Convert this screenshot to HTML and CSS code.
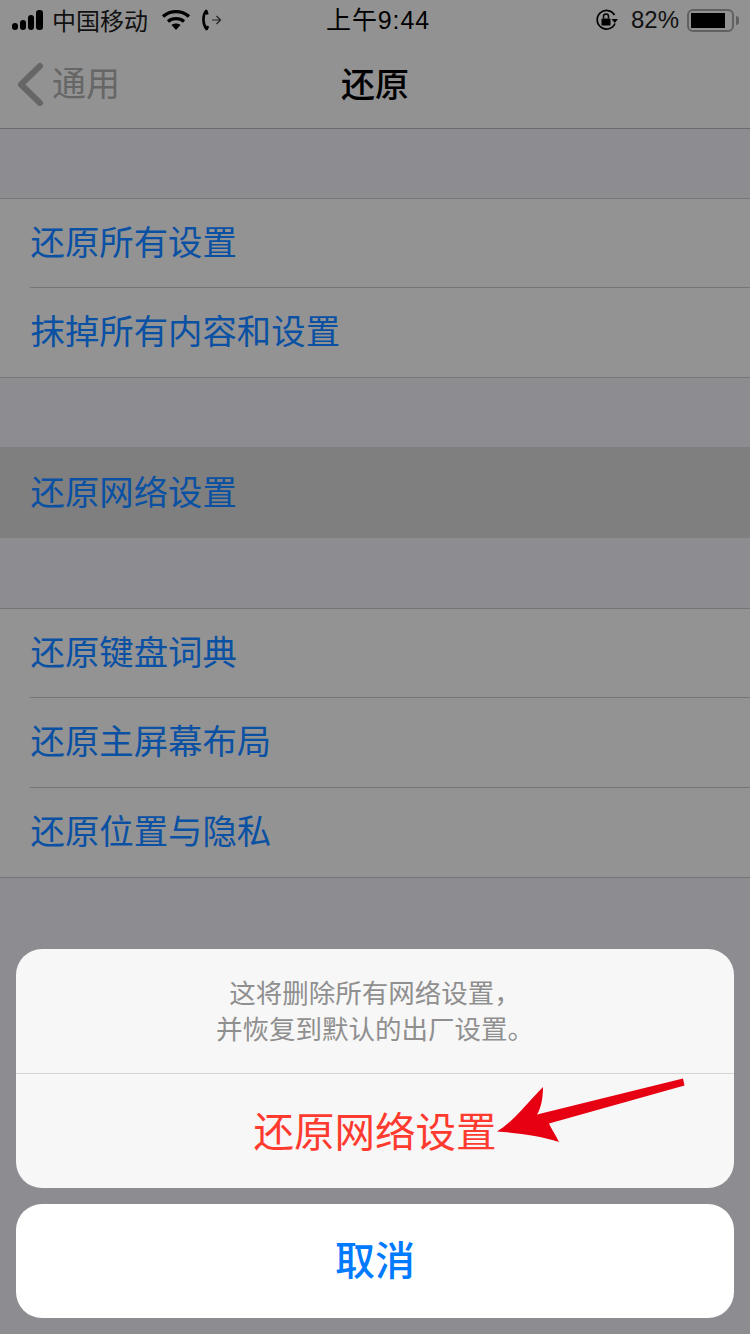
FILE: index.html
```html
<!DOCTYPE html>
<html lang="zh-CN">
<head>
<meta charset="utf-8">
<title>还原</title>
<link rel="stylesheet" href="styles.css">
</head>
<body>
<div class="screen">
  <header class="topbar">
    <div class="status">
      <div class="status-left">
        <svg class="signal" width="36" height="20" viewBox="0 0 36 20"><rect x="0" y="13" width="6" height="7" rx="3"/><rect x="8" y="10" width="6" height="10" rx="3"/><rect x="16" y="5" width="6" height="15" rx="3"/><rect x="24" y="0" width="7" height="20" rx="3"/></svg>
        <span class="carrier">中国移动</span>
        <svg class="wifi" width="30" height="22" viewBox="0 0 30 22" fill="none" stroke="#000" stroke-width="3.4"><path d="M2 7.500C9.500 1 20.500 1 28 7.500"/><path d="M7 12.500C11.500 8.700 18.500 8.700 23 12.500"/><path d="M15 21l-4.500-5c2.500-2 6.500-2 9 0z" fill="#000" stroke="none"/></svg>
        <svg class="phone" width="22" height="24" viewBox="0 0 22 24" fill="none"><path d="M6 3C2.500 7 2.500 16 6.500 21" stroke="#000" stroke-width="2.600" stroke-linecap="round"/><path d="M6 2.500l1.500 4M6.500 21.500l1.500-3.500" stroke="#000" stroke-width="2.600"/><path d="M12 12h8.500M16.500 8l4 4-4 4" stroke="#222" stroke-width="1.200"/></svg>
      </div>
      <span class="clock">上午9:44</span>
      <div class="status-right">
        <svg class="lock" width="24" height="24" viewBox="0 0 24 24" fill="none"><path d="M20 15.500A9.300 9.300 0 1 1 19.500 7" stroke="#000" stroke-width="1.700"/><path d="M16.500 11h6.500l-3.200 4z" fill="#000"/><rect x="6.500" y="10.500" width="9" height="7" rx="1" fill="#000"/><path d="M8.500 10.500V8.500a2.500 2.500 0 0 1 5 0v2" stroke="#000" stroke-width="1.500"/></svg>
        <span class="percent">82%</span>
        <div class="battery"><div class="battery-fill"></div></div>
        <div class="battery-cap"></div>
      </div>
    </div>
    <nav class="nav">
      <div class="back">
        <svg width="28" height="44" viewBox="0 0 28 44" fill="none"><path d="M24 4L5 22.500 24 41" stroke="#666" stroke-width="6" stroke-linecap="round" stroke-linejoin="round"/></svg>
        <span class="back-label">通用</span>
      </div>
      <h1 class="title">还原</h1>
    </nav>
  </header>

  <section class="group">
    <div class="row row-sep">还原所有设置</div>
    <div class="row">抹掉所有内容和设置</div>
  </section>

  <section class="group group-pressed">
    <div class="row row-pressed">还原网络设置</div>
  </section>

  <section class="group">
    <div class="row row-sep">还原键盘词典</div>
    <div class="row row-sep">还原主屏幕布局</div>
    <div class="row">还原位置与隐私</div>
  </section>

  <div class="sheet">
    <div class="card">
      <p class="message">这将删除所有网络设置，<br>并恢复到默认的出厂设置。</p>
      <div class="destructive">还原网络设置</div>
    </div>
    <div class="cancel">取消</div>
  </div>

  <svg class="arrow" width="190" height="70" viewBox="0 0 190 70"><path d="M186 0.500L187.500 7.500 52 45.500C54 50 58 56 62 64 44 58 22 55 0 53.500 16 44 30 25 46 9 46 20 44 30 40 36.500z" fill="#e60012"/></svg>
</div>
</body>
</html>
```
FILE: styles.css
```css
* { box-sizing: border-box; }
html, body { margin: 0; padding: 0; }
body {
  width: 750px;
  height: 1334px;
  overflow: hidden;
  font-family: "Noto Sans CJK SC", "Liberation Sans", sans-serif;
}
.screen {
  position: relative;
  width: 750px;
  height: 1334px;
  background: #8d8c91;
  overflow: hidden;
}
.topbar {
  height: 129px;
  background: #929292;
  border-bottom: 1px solid #6c6c70;
}
.status {
  position: relative;
  height: 40px;
  display: flex;
  align-items: center;
  justify-content: space-between;
  padding: 0 11px 0 12px;
  color: #000;
}
.status-left, .status-right { display: flex; align-items: center; }
.carrier { font-size: 24px; line-height: 38px; margin-left: 4px; color: #111; }
.wifi { margin-left: 13px; }
.phone { margin-left: 9px; }
.clock {
  position: absolute;
  left: 326px;
  top: 0;
  font-family: "Liberation Sans", "Noto Sans CJK SC", sans-serif;
  font-size: 25px;
  line-height: 40px;
  color: #000;
  letter-spacing: 0.9px;
}
.lock { margin-right: 12px; }
.percent { font-family: "Liberation Sans", sans-serif; font-size: 24px; color: #111; margin-right: 8px; line-height: 40px; }
.battery {
  width: 47px;
  height: 23px;
  border: 2px solid #616161;
  border-radius: 6px;
  padding: 2px;
}
.battery-fill { width: 34px; height: 15px; background: #000; }
.battery-cap { width: 3px; height: 9px; background: #616161; margin-left: 2px; border-radius: 0 3px 3px 0; }
.nav {
  position: relative;
  height: 88px;
  display: flex;
  align-items: center;
  justify-content: center;
}
.back {
  position: absolute;
  left: 16px;
  top: 0;
  height: 88px;
  display: flex;
  align-items: center;
  gap: 8px;
}
.back-label { font-size: 34px; color: #666; line-height: 84px; height: 88px; }
.title { margin: 0; font-size: 34px; font-weight: 500; color: #000; line-height: 86px; height: 88px; }
.group {
  margin-top: 69px;
  background: #939393;
  border-top: 1px solid #757578;
  border-bottom: 1px solid #757578;
}
.group-pressed {
  border: 0;
  background: #7f7f7f;
}
.group-pressed + .group { margin-top: 70px; }
.row {
  height: 89px;
  padding-left: 30.500px;
  font-size: 34.400px;
  line-height: 82px;
  color: #0a50a3;
  white-space: nowrap;
}
.row-sep { position: relative; }
.row-sep + .row-sep { height: 90px; }
.row-sep::after {
  content: "";
  position: absolute;
  left: 30px;
  right: 0;
  bottom: 0;
  height: 1px;
  background: #757578;
}
.row-pressed { height: 91px; line-height: 86px; }
.sheet {
  position: absolute;
  left: 16px;
  right: 16px;
  top: 949px;
  display: flex;
  flex-direction: column;
  gap: 16px;
}
.card {
  height: 239px;
  background: #f7f7f7;
  border-radius: 26px;
}
.message {
  margin: 0;
  height: 125px;
  padding-top: 25px;
  border-bottom: 1px solid #d4d4d4;
  font-size: 26.500px;
  line-height: 36px;
  color: #8f8f8f;
  text-align: center;
}
.destructive {
  height: 114px;
  font-size: 40.500px;
  line-height: 111px;
  color: #ff3b30;
  text-align: center;
}
.cancel {
  height: 114px;
  background: #fff;
  border-radius: 26px;
  font-size: 40px;
  font-weight: 500;
  line-height: 108px;
  color: #007aff;
  text-align: center;
}
.arrow {
  position: absolute;
  left: 497px;
  top: 1078px;
}
```
